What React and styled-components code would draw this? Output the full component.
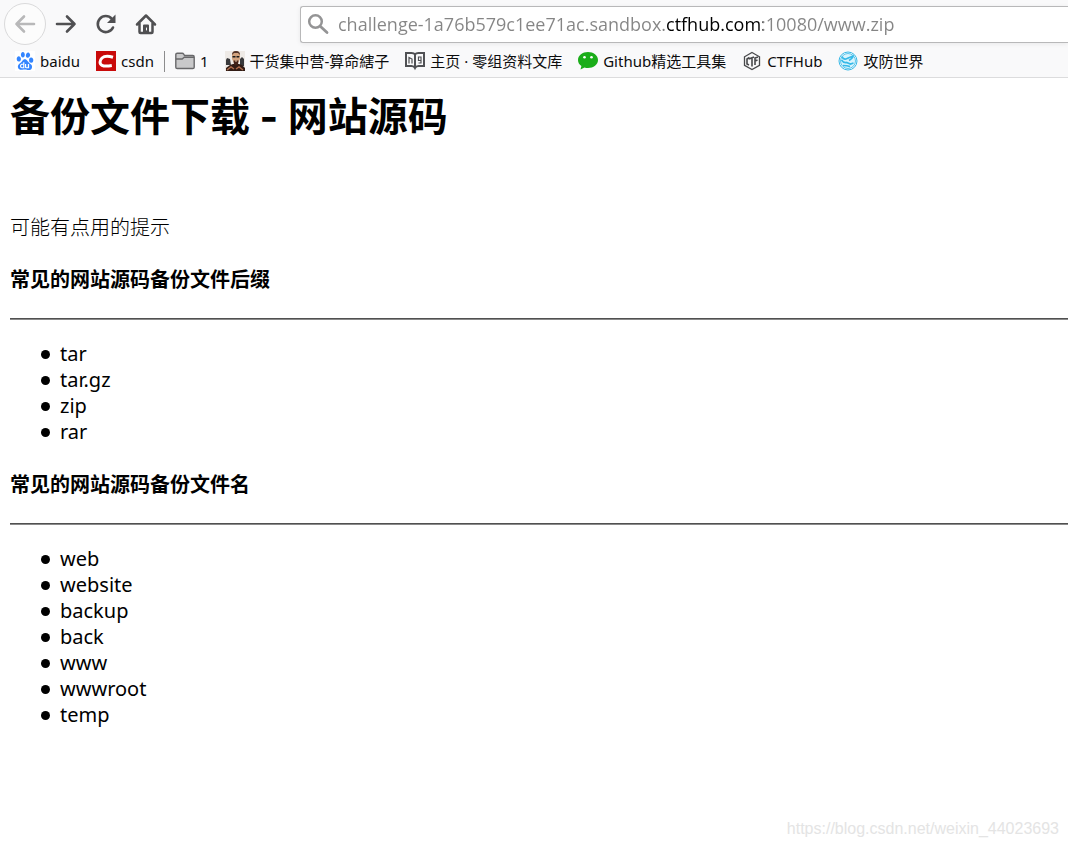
import React from "react";
import styled, { createGlobalStyle } from "styled-components";
import { SiBaidu } from "react-icons/si";

const GlobalStyle = createGlobalStyle`
  * {
    box-sizing: border-box;
  }
  body {
    margin: 0;
    background: #fff;
    color: #000;
    font-family: "Noto Sans", "Noto Sans CJK SC", sans-serif;
  }
`;

const suffixes = ["tar", "tar.gz", "zip", "rar"];
const names = ["web", "website", "backup", "back", "www", "wwwroot", "temp"];

const BackIcon = () => (
  <svg width="22" height="22" viewBox="0 0 22 22" fill="none" stroke="#b8b8b9" strokeWidth="2.6" strokeLinecap="round" strokeLinejoin="round">
    <path d="M20 11H2.5M10 3.5 2.5 11l7.500 7.500" />
  </svg>
);

const ForwardIcon = () => (
  <svg width="22" height="22" viewBox="0 0 22 22" fill="none" stroke="#505052" strokeWidth="2.6" strokeLinecap="round" strokeLinejoin="round">
    <path d="M2 11h17.500M12 3.500 19.500 11 12 18.500" />
  </svg>
);

const ReloadIcon = () => (
  <svg width="22" height="22" viewBox="0 0 22 22">
    <path d="M16.800 5.800A8 8 0 1 0 18 14.500" fill="none" stroke="#505052" strokeWidth="2.600" strokeLinecap="round" />
    <path d="M20.500 1.500v8.500H12z" fill="#505052" />
  </svg>
);

const HomeIcon = () => (
  <svg width="22" height="22" viewBox="0 0 22 22" fill="none" stroke="#505052" strokeWidth="2.500" strokeLinecap="round" strokeLinejoin="round">
    <path d="M2 11.500 11 2.500l9 9M4.500 10.500v8.500q0 1 1 1h11q1 0 1-1v-8.500" />
    <path d="M9 19.500v-7h4v7" strokeWidth="2" fill="#505052" />
    <path d="M11.500 15v2" stroke="#f9f9fa" strokeWidth="1" />
  </svg>
);

const SearchIcon = () => (
  <svg width="22" height="22" viewBox="0 0 22 22" fill="none" stroke="#949495" strokeLinecap="round">
    <circle cx="8.500" cy="8.500" r="6.300" strokeWidth="2.500" />
    <path d="m13.500 13.500 6.500 6" strokeWidth="2.800" />
  </svg>
);

const PawIcon = () => (
  <svg width="20" height="20" viewBox="0 0 20 20">
    <path d="M0 0h20v20H0z" fill="#fff" />
    <SiBaidu x="1" y="1" size={18} color="#3385ff" />
  </svg>
);

const CsdnIcon = () => (
  <svg width="20" height="20" viewBox="0 0 20 20">
    <path d="M0 0h20v20H0z" fill="#c90a0a" />
    <path d="M17 6.200C13 5 8.500 4.700 6 7c-2.500 2.300-2.700 6 0 7.300 2.500 1.200 6 .8 9.800.2" fill="none" stroke="#fff" strokeWidth="3" />
  </svg>
);

const FolderIcon = () => (
  <svg width="20" height="20" viewBox="0 0 20 20" fill="#c9c9ca" stroke="#68686a" strokeWidth="1.400" strokeLinejoin="round">
    <path d="M.8 16.200V3.600q0-1.400 1.400-1.400h5q1 0 1.500 1l.8 1.300h8.300q1.400 0 1.400 1.400v10.300q0 1.300-1.400 1.300H2.200q-1.400 0-1.400-1.300z" />
    <path d="M1 8h6.200l2-1.800H19" fill="none" />
  </svg>
);

const FaceIcon = () => (
  <svg width="20" height="20" viewBox="0 0 20 20">
    <path d="M0 0h20v20H0z" fill="#eeeae6" />
    <path d="M1 9l1-2 3 1 1 6H1zM15 8l2-2 2 2v7h-4z" fill="#39393b" />
    <path d="M1 20v-3l4-3 3-1h6l3 1 3 3v3z" fill="#321c15" />
    <path d="M7 4q0-4 4-4t4 4v4l-2 4h-4L7 8z" fill="#d3a37e" />
    <path d="M7 4q0-4 4-4t4 4l-2-2H9z" fill="#51342a" />
    <path d="M7.500 5h3v1.500h-3zM11.500 5h3l-.5 1.500h-2.500z" fill="#191919" />
    <path d="M8.500 9.500h5l-.5 4-2 1-2-1z" fill="#422319" />
    <path d="M10 10h2" stroke="#e5c3a7" />
    <path d="m2 19 4-3 3 2M18 19l-4-3-3 2" fill="none" stroke="#ad6b4b" strokeWidth="1.500" />
  </svg>
);

const BookIcon = () => (
  <svg width="20" height="20" viewBox="0 0 20 20" fill="none" stroke="#505154" strokeWidth="2">
    <path d="M1 2h5.500q2.500 0 3.500 1.500Q11 2 13.500 2H19v13h-5.500q-2.500 0-3.500 2-1-2-3.500-2H1zM10 4v13" />
    <path d="M4 12.500V6.500l3 1.500v4.500M13.500 6v3.500H16V6zM16 9v3h-2.500" strokeWidth="1.200" />
  </svg>
);

const ChatIcon = () => (
  <svg width="20" height="20" viewBox="0 0 20 20">
    <path d="M10 1C4.500 1 0 4.500 0 9c0 2.500 1.200 4.500 3.400 6L2.500 18.500 6.500 16.400q1.700.6 3.500.6c5.500 0 10-3.500 10-8s-4.500-8-10-8z" fill="#1aad19" />
    <circle cx="6.500" cy="6.300" r="1.300" fill="#fff" />
    <circle cx="13.500" cy="6.300" r="1.300" fill="#fff" />
  </svg>
);

const HubIcon = () => (
  <svg width="20" height="20" viewBox="0 0 20 20" fill="none" stroke="#48494b">
    <path d="M10 1.500 17.500 5.800v8.500L10 18.600 2.500 14.300V5.800z" strokeWidth="1.300" />
    <path d="M7.500 6.500 5 8v5l2 1M7.500 8.500V7M8 7.500l4-1.500M10 7v8.500M13 14V7l3-1M13 10l2.500-1" strokeWidth="1.600" />
  </svg>
);

const WorldIcon = () => (
  <svg width="20" height="20" viewBox="0 0 20 20" fill="none" stroke="#36b9e8">
    <circle cx="10" cy="10" r="9" strokeWidth="1" />
    <circle cx="10" cy="10" r="7.500" fill="#d9f4fd" strokeWidth=".8" />
    <path d="M4 5.500q1 3 4 2.500l7-3q0 2-4 4.500M3.500 9q2 3 5 2.500l4 1.500 3-1M5 14.500q4 0 7 1" strokeWidth="1.700" />
  </svg>
);

const bookmarks = [
  { label: "baidu", Icon: PawIcon },
  { label: "csdn", Icon: CsdnIcon, divider: true },
  { label: "1", Icon: FolderIcon },
  { label: "干货集中营-算命縖子", Icon: FaceIcon },
  { label: "主页 · 零组资料文库", Icon: BookIcon },
  { label: "Github精选工具集", Icon: ChatIcon },
  { label: "CTFHub", Icon: HubIcon },
  { label: "攻防世界", Icon: WorldIcon },
];

const FileSection = ({ title, items }) => (
  <section>
    <SectionTitle>{title}</SectionTitle>
    <Rule />
    <FileList>
      {items.map((item) => (
        <FileItem key={item}>{item}</FileItem>
      ))}
    </FileList>
  </section>
);

const App = () => {
  return (
    <>
      <GlobalStyle />
      <Page>
        <Chrome>
          <Toolbar>
            <NavButtons>
              <NavButton $round disabled aria-label="Back"><BackIcon /></NavButton>
              <NavButton aria-label="Forward"><ForwardIcon /></NavButton>
              <NavButton aria-label="Reload"><ReloadIcon /></NavButton>
              <NavButton aria-label="Home"><HomeIcon /></NavButton>
            </NavButtons>
            <AddressBar>
              <SearchIcon />
              <AddressInput
                type="text"
                aria-label="Address"
                spellCheck="false"
                defaultValue="challenge-1a76b579c1ee71ac.sandbox.ctfhub.com:10080/www.zip"
              />
            </AddressBar>
          </Toolbar>
          <Bookmarks>
            {bookmarks.map(({ label, Icon, divider }) => (
              <React.Fragment key={label}>
                <Bookmark href="#">
                  <Icon />
                  {label}
                </Bookmark>
                {divider && <Divider />}
              </React.Fragment>
            ))}
          </Bookmarks>
        </Chrome>
        <Content>
          <Title>备份文件下载 - 网站源码</Title>
          <Hint>可能有点用的提示</Hint>
          <FileSection title="常见的网站源码备份文件后缀" items={suffixes} />
          <FileSection title="常见的网站源码备份文件名" items={names} />
        </Content>
        <Watermark>https://blog.csdn.net/weixin_44023693</Watermark>
      </Page>
    </>
  );
};

const Page = styled.div`
  display: flex;
  flex-direction: column;
  min-height: 100vh;
`;

const Chrome = styled.header`
  background: #f9f9fa;
  border-bottom: 1px solid #dcdcdd;
`;

const Toolbar = styled.div`
  display: flex;
  align-items: center;
  height: 48px;
  padding-left: 4px;
`;

const NavButtons = styled.div`
  display: flex;
  align-items: center;
  width: 296px;
  flex-shrink: 0;
`;

const NavButton = styled.button`
  display: flex;
  align-items: center;
  justify-content: center;
  width: ${(props) => (props.$round ? "42px" : "40px")};
  height: ${(props) => (props.$round ? "42px" : "40px")};
  padding: 0;
  border: 1px solid ${(props) => (props.$round ? "#dadadb" : "transparent")};
  border-radius: 50%;
  background: ${(props) => (props.$round ? "#fcfcfc" : "none")};
`;

const AddressBar = styled.div`
  display: flex;
  align-items: center;
  gap: 9px;
  flex: 1;
  height: 37px;
  padding-left: 6px;
  border: 1px solid #b8b8b9;
  border-right: 0;
  border-radius: 3px 0 0 3px;
  background: #fff;
  box-shadow: 0 1px 5px rgba(0, 0, 0, 0.07);
`;

/* the host's main domain is darker than the rest of the address */
const AddressInput = styled.input`
  flex: 1;
  min-width: 0;
  height: 35px;
  padding: 0;
  border: 0;
  outline: 0;
  font-family: "Open Sans", sans-serif;
  font-size: 18px;
  color: transparent;
  caret-color: #000;
  background: linear-gradient(to right, #858585 328px, #000 328px, #000 425px, #858585 425px);
  -webkit-background-clip: text;
  background-clip: text;
`;

const Bookmarks = styled.nav`
  display: flex;
  align-items: center;
  gap: 16px;
  height: 29px;
  padding: 0 15px 3px;
  overflow: hidden;
`;

const Bookmark = styled.a`
  display: flex;
  align-items: center;
  gap: 5px;
  font-size: 15px;
  line-height: 20px;
  white-space: nowrap;
  color: #0c0c0d;
  text-decoration: none;
`;

const Divider = styled.span`
  width: 1px;
  height: 21px;
  margin: 0 -6px;
  background: #8c8c8d;
`;

const Content = styled.main`
  padding: 13px 0 0 10px;
  font-size: 20px;
  line-height: 26px;
`;

const Title = styled.h1`
  margin: 0;
  font-family: "Inter", "Noto Sans CJK SC", sans-serif;
  font-size: 40px;
  line-height: 52px;
`;

const Hint = styled.p`
  margin: 72px 0 26px;
  font-weight: 300;
`;

const SectionTitle = styled.h4`
  margin: 0;
  font-size: 20px;
`;

const Rule = styled.hr`
  height: 2px;
  margin: 25px 0 21px;
  border: 0;
  border-top: 1px solid #505050;
  background: #8a8a8a;
`;

const FileList = styled.ul`
  margin: 0 0 27px;
  padding-left: 31px;
  list-style: none;
`;

const FileItem = styled.li`
  display: flex;
  align-items: center;
  gap: 10px;

  &::before {
    content: "";
    width: 9px;
    height: 9px;
    border-radius: 50%;
    background: #000;
  }
`;

const Watermark = styled.footer`
  margin-top: auto;
  padding: 0 9px 8px;
  font-family: "Liberation Sans", sans-serif;
  font-size: 16px;
  line-height: 20px;
  text-align: right;
  color: #e4e4e4;
`;

export default App;
